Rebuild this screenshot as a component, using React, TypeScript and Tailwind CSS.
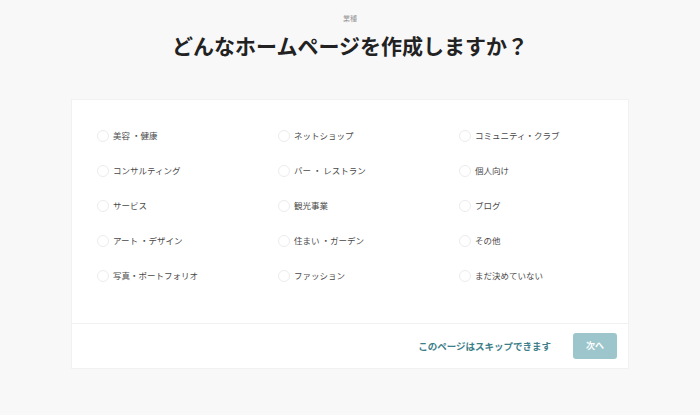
import React from 'react';

const OPTIONS: string[][] = [
  ['美容 ・健康', 'ネットショップ', 'コミュニティ・クラブ'],
  ['コンサルティング', 'バー ・ レストラン', '個人向け'],
  ['サービス', '観光事業', 'ブログ'],
  ['アート ・デザイン', '住まい ・ガーデン', 'その他'],
  ['写真・ポートフォリオ', 'ファッション', 'まだ決めていない'],
];

function Radio({ label }: { label: string }) {
  return (
    <label className="flex items-center h-[35px] cursor-pointer">
      <span className="w-[12px] h-[12px] rounded-full border border-[#ececec] bg-white shrink-0" />
      <span className="ml-[4px] text-[8.5px] text-[#4a4a4a] whitespace-nowrap">{label}</span>
    </label>
  );
}

export default function App() {
  return (
    <div
      className="min-h-[415px] w-full bg-[#f8f8f8] pt-[14px]"
      style={{ fontFamily: '"Noto Sans CJK JP", "Noto Sans", sans-serif' }}
    >
      <p className="text-center text-[7px] leading-[9px] text-[#9a9a9a]">業種</p>
      <h1 className="mt-[8px] text-center text-[21px] leading-[28px] font-bold text-[#222]">
        どんなホームページを作成しますか？
      </h1>
      <div className="mt-[40px] mx-auto w-[558px] bg-white border border-[#f1f1f1]">
        <div className="pl-[25px] pt-[18px] pb-[30px] grid grid-cols-[181px_181px_181px]">
          {OPTIONS.flat().map((o) => (
            <Radio key={o} label={o} />
          ))}
        </div>
        <div className="border-t border-[#f1f1f1] h-[45px] flex items-center justify-end pr-[11px]">
          <button type="button" className="text-[9.5px] font-bold text-[#3d7e89] mr-[22px]">
            このページはスキップできます
          </button>
          <button
            type="button"
            className="w-[44px] h-[26px] rounded-[3px] bg-[#9cc6cc] text-white text-[9px] font-bold"
          >
            次へ
          </button>
        </div>
      </div>
    </div>
  );
}
